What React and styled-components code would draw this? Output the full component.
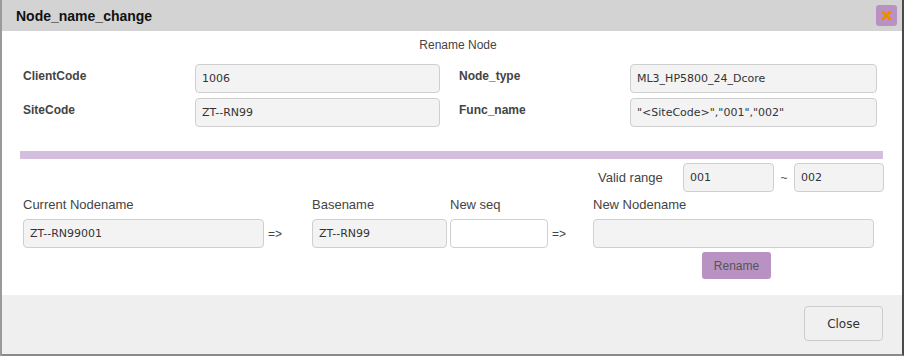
import React from 'react';
import styled, { createGlobalStyle } from 'styled-components';

const Global = createGlobalStyle`
  html, body {
    margin: 0;
    padding: 0;
    background: #9a9a9a;
  }
  body {
    font-family: "Liberation Sans", Arial, sans-serif;
  }
`;

const Dialog = styled.div`
  margin-left: 2px;
  width: 900px;
  height: 354px;
  border-right: 2px solid #4a4a4a;
  border-bottom: 2px solid #8a8a8a;
  background: #fff;
  display: flex;
  flex-direction: column;
`;

const TitleBar = styled.div`
  height: 31px;
  background: #d3d3d3;
  display: flex;
  align-items: center;
  justify-content: space-between;
  padding: 0 5px 0 14px;
`;

const Title = styled.h3`
  margin: 0;
  font-size: 14px;
  font-weight: bold;
  color: #111;
`;

const XButton = styled.button`
  width: 21px;
  height: 21px;
  border: 0;
  border-radius: 3px;
  background: #b992c4;
  padding: 0;
  display: flex;
  align-items: center;
  justify-content: center;
`;

const Body = styled.div`
  flex: 1;
`;

const Caption = styled.div`
  text-align: center;
  font-size: 12px;
  color: #444;
  padding-top: 7px;
  height: 26px;
  box-sizing: border-box;
  padding-left: 12px;
`;

const InfoGrid = styled.div`
  display: grid;
  grid-template-columns: 172px 245px 190px 247px;
  row-gap: 5px;
  padding-left: 21px;
  margin-top: 7px;
`;

const InfoLabel = styled.label`
  font-size: 12px;
  font-weight: bold;
  color: #444;
  display: flex;
  align-items: center;
  height: 29px;
  margin-top: -3px;
  padding-left: ${p => p.$indent || 0}px;
`;

const Field = styled.div`
  box-sizing: border-box;
  height: 29px;
  width: ${p => p.$w ? `${p.$w}px` : 'auto'};
  border: 1px solid #cfcfcf;
  border-radius: 4px;
  background: ${p => p.$white ? '#fff' : '#f3f3f3'};
  display: flex;
  align-items: center;
  padding: 0 6px;
  font-family: "DejaVu Sans", Verdana, sans-serif;
  font-size: 11px;
  color: #333;
  white-space: nowrap;
`;

const Divider = styled.div`
  height: 8px;
  background: #d3bfdd;
  margin: 24px 19px 4px 18px;
`;

const RangeRow = styled.div`
  display: flex;
  align-items: center;
  padding-left: 596px;
`;

const RangeLabel = styled.span`
  font-size: 13px;
  color: #444;
  width: 85px;
`;

const Tilde = styled.span`
  width: 20px;
  text-align: center;
  font-size: 12px;
  color: #555;
`;

const NameRow = styled.div`
  display: flex;
  padding-left: 21px;
  margin-top: 5px;
`;

const Group = styled.div`
  display: flex;
  flex-direction: column;
  width: ${p => p.$w}px;
  margin-left: ${p => p.$ml || 0}px;
`;

const GroupLabel = styled.div`
  font-size: 13px;
  color: #444;
  height: 16px;
  line-height: 16px;
  margin-bottom: 6px;
`;

const Arrow = styled.div`
  width: ${p => p.$w}px;
  padding-top: 22px;
  box-sizing: border-box;
  display: flex;
  align-items: center;
  height: 51px;
  padding-left: 4px;
  font-size: 12px;
  color: #444;
`;

const RenameButton = styled.button`
  align-self: center;
  margin-top: 4px;
  margin-left: 6px;
  width: 69px;
  height: 27px;
  border: 0;
  border-radius: 3px;
  background: #b992c4;
  color: #555;
  font-family: "Liberation Sans", Arial, sans-serif;
  font-size: 12px;
`;

const Footer = styled.div`
  height: 59px;
  background: #efefef;
  display: flex;
  justify-content: flex-end;
  align-items: flex-start;
  padding: 11px 19px 0 0;
  box-sizing: border-box;
`;

const CloseButton = styled.button`
  width: 79px;
  height: 35px;
  border: 1px solid #cccccc;
  border-radius: 4px;
  background: #f0f0f0;
  color: #333;
  font-family: "DejaVu Sans", Verdana, sans-serif;
  font-size: 12px;
`;

export default function App() {
  return (
    <>
      <Global />
      <Dialog>
        <TitleBar>
          <Title>Node_name_change</Title>
          <XButton aria-label="close">
            <svg width="11" height="11" viewBox="0 0 11 11">
              <path d="M2 2 L9 9 M9 2 L2 9" stroke="#f08a00" strokeWidth="2.6" strokeLinecap="round" />
            </svg>
          </XButton>
        </TitleBar>
        <Body>
          <Caption>Rename Node</Caption>
          <InfoGrid>
            <InfoLabel>ClientCode</InfoLabel>
            <Field>1006</Field>
            <InfoLabel $indent={19}>Node_type</InfoLabel>
            <Field>ML3_HP5800_24_Dcore</Field>
            <InfoLabel>SiteCode</InfoLabel>
            <Field>ZT--RN99</Field>
            <InfoLabel $indent={19}>Func_name</InfoLabel>
            <Field>"&lt;SiteCode&gt;","001","002"</Field>
          </InfoGrid>
          <Divider />
          <RangeRow>
            <RangeLabel>Valid range</RangeLabel>
            <Field $w={91}>001</Field>
            <Tilde>~</Tilde>
            <Field $w={90}>002</Field>
          </RangeRow>
          <NameRow>
            <Group $w={241}>
              <GroupLabel>Current Nodename</GroupLabel>
              <Field>ZT--RN99001</Field>
            </Group>
            <Arrow $w={48}>=&gt;</Arrow>
            <Group $w={135}>
              <GroupLabel>Basename</GroupLabel>
              <Field>ZT--RN99</Field>
            </Group>
            <Group $w={98} $ml={3}>
              <GroupLabel>New seq</GroupLabel>
              <Field $white />
            </Group>
            <Arrow $w={45}>=&gt;</Arrow>
            <Group $w={281}>
              <GroupLabel>New Nodename</GroupLabel>
              <Field />
              <RenameButton>Rename</RenameButton>
            </Group>
          </NameRow>
        </Body>
        <Footer>
          <CloseButton>Close</CloseButton>
        </Footer>
      </Dialog>
    </>
  );
}
